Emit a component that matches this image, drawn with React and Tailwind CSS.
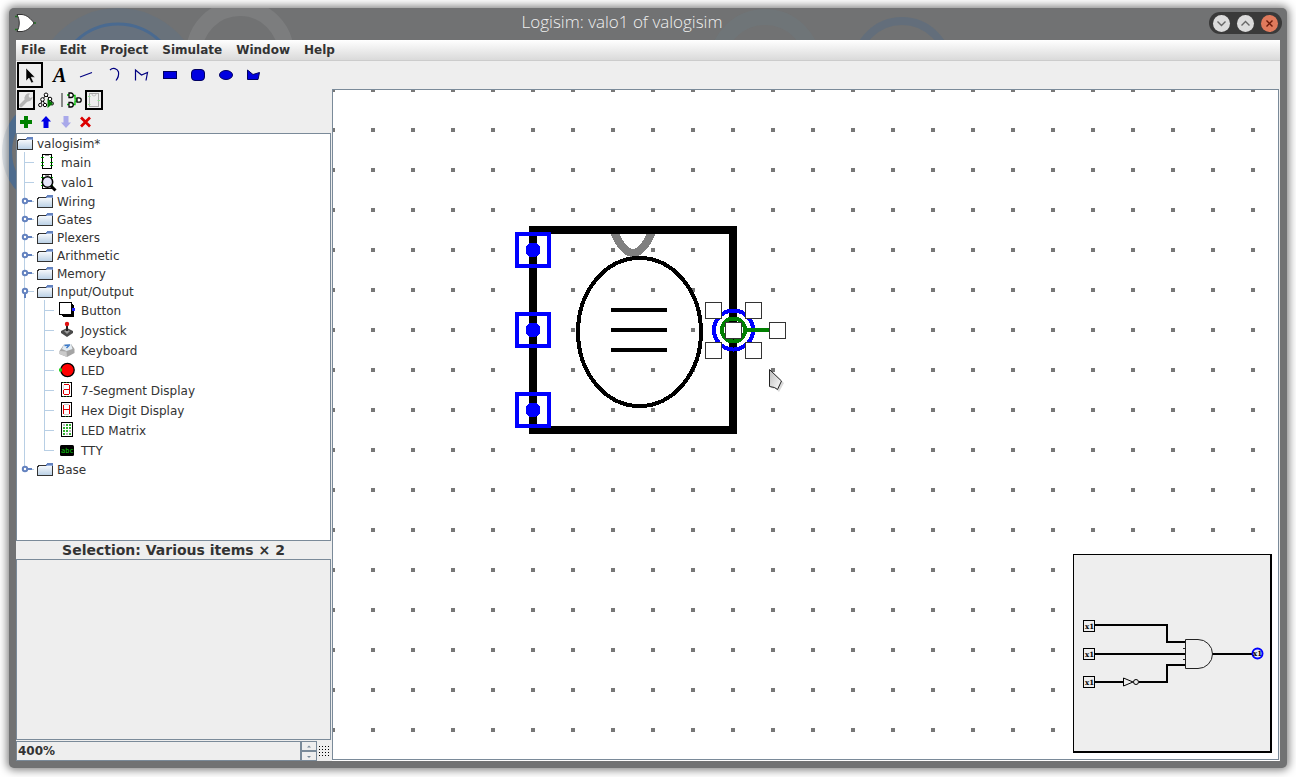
const line = "#b8cfe5";

function Folder() {
  return (
    <svg width="16" height="18" viewBox="0 0 16 18" shapeRendering="crispEdges" className="shrink-0">
      <defs>
        <linearGradient id="folderFill" x1="0" y1="0" x2="0" y2="1">
          <stop offset="0" stopColor="#ffffff" />
          <stop offset="1" stopColor="#b8cfe5" />
        </linearGradient>
      </defs>
      <path d="M0.5 15.5V6.5H1.5V5.5H8.5L10.5 4.5H15.5V15.5Z" fill="url(#folderFill)" stroke="#333333" />
      <path d="M9 5V4H10V3H16V6H9Z" fill="#6382bf" />
      <path d="M10 5H15V6H10Z" fill="#9bb4dc" />
    </svg>
  );
}

function Gutter({ h, depth, handle, last }) {
  const m = h / 2;
  const w = depth === 1 ? 20 : 40;
  const x = depth === 1 ? 7 : 27;
  return (
    <svg width={w} height={h} viewBox={`0 0 ${w} ${h}`} className="shrink-0" shapeRendering="crispEdges">
      {depth === 2 && <rect x="7" y="0" width="1" height={h} fill={line} />}
      <rect x={x} y="0" width="1" height={last ? m : h} fill={line} />
      <rect x={x} y={m} width="10" height="1" fill={line} />
      {handle && (
        <g shapeRendering="auto">
          {handle === "closed" ? (
            <path d={`M9 ${m}H15`} stroke="#6382bf" strokeWidth="2" />
          ) : (
            <path d={`M8 ${m}V${m + 7}`} stroke="#6382bf" strokeWidth="2" />
          )}
          <circle cx="8" cy={m} r="2.2" fill="#ffffff" stroke="#6382bf" strokeWidth="2" />
        </g>
      )}
    </svg>
  );
}

function CircuitGlyph() {
  return (
    <g>
      <rect x="5.5" y="2.5" width="9" height="14" fill="#fff" stroke="#000" />
      <path d="M8 3.5H12" stroke="#999" />
      <path d="M4 5.5h3M4 10.5h3M4 13.5h3M13 5.5h3M13 10.5h3M13 13.5h3" stroke="#00c800" />
      <path d="M5 5.5h1M5 10.5h1M5 13.5h1M14 5.5h1M14 10.5h1M14 13.5h1" stroke="#004000" />
    </g>
  );
}

const glyphs = {
  main: <CircuitGlyph />,
  valo1: (
    <g>
      <CircuitGlyph />
      <g shapeRendering="auto">
        <path d="M14 14L18.500 18.500" stroke="#000" strokeWidth="3" />
        <circle cx="10.500" cy="10" r="5.200" fill="#e2e2fa" fillOpacity="0.9" stroke="#000" strokeWidth="1.5" />
      </g>
    </g>
  ),
  Button: (
    <g>
      <path d="M4 15h11V4l2 2v11H6z" fill="#000" />
      <rect x="2.500" y="2.500" width="12" height="12" fill="#fff" stroke="#000" />
      <rect x="15" y="8" width="3" height="3" fill="#2222ff" />
    </g>
  ),
  Joystick: (
    <g shapeRendering="auto">
      <path d="M4 11L10 8L16 11V13L10 17L4 13Z" fill="#4a4a4a" />
      <path d="M7 11L10 10L13 11L10 14Z" fill="#9a9a9a" />
      <path d="M10 4V11" stroke="#222" strokeWidth="2" />
      <circle cx="10" cy="4" r="2.200" fill="#e01010" />
    </g>
  ),
  Keyboard: (
    <g shapeRendering="auto">
      <path d="M2.500 11L7 4.500L14 4L17.500 9L17.500 13L10 17L2.500 14Z" fill="#a4a4a4" />
      <path d="M7 4.500L14 4L15.500 9L9.500 11L5 9Z" fill="#e4ecf2" />
      <path d="M2.500 11L9.500 11.500L10 17L2.500 14Z" fill="#cacaca" />
      <path d="M7.500 5.500L13 5M9.500 8L12 5.500" stroke="#3a78c8" strokeWidth="1.400" />
    </g>
  ),
  LED: (
    <g shapeRendering="auto">
      <circle cx="10.500" cy="10" r="6.700" fill="#ff0000" stroke="#000" strokeWidth="1.300" />
      <path d="M2 10H5" stroke="#20d020" strokeWidth="3" />
    </g>
  ),
  "7-Segment Display": (
    <g>
      <rect x="4.500" y="2.500" width="10" height="14" fill="#fff" stroke="#000" />
      <path d="M6.500 5V14" stroke="#ddd" />
      <path d="M7 4.500H12M12.500 5V14M7 14.500H12M7 9.500H12M6.500 10V14" stroke="#e00000" fill="none" />
      <path d="M6 16.500h8M6 2.500h8" stroke="#208020" strokeDasharray="1 2" />
    </g>
  ),
  "Hex Digit Display": (
    <g>
      <rect x="4.500" y="2.500" width="10" height="14" fill="#fff" stroke="#000" />
      <path d="M7 14.500H12M7 4.500H12" stroke="#ccc" />
      <path d="M6.500 5V14M12.500 5V14M7 9.500H12" stroke="#e00000" />
      <path d="M8 16.500h4" stroke="#208020" strokeDasharray="1 2" />
    </g>
  ),
  "LED Matrix": (
    <g>
      <rect x="4.500" y="2.500" width="11" height="14" fill="#fff" stroke="#000" />
      {[4, 7, 10, 13].map((y, r) =>
        [6, 9, 12].map((x, c) => (
          <rect key={`${x}-${y}`} x={x} y={y} width="2" height="2" fill={(r + c) % 4 === 0 ? "#bbbbbb" : "#30b030"} />
        ))
      )}
    </g>
  ),
  TTY: (
    <g>
      <rect x="3" y="5" width="14" height="11" rx="1.500" fill="#000" shapeRendering="auto" />
      <text x="4" y="13" fontSize="7" fill="#10d010" className="font-['DejaVu_Sans_Mono',monospace]">abc</text>
    </g>
  ),
};

function Glyph({ name }) {
  return (
    <svg width="20" height="20" viewBox="0 0 20 20" shapeRendering="crispEdges" className="shrink-0">
      {glyphs[name]}
    </svg>
  );
}

function ToolRow({ name, depth, last }) {
  return (
    <li className="flex h-[20px] items-center">
      <Gutter h={20} depth={depth} last={last} />
      <Glyph name={name} />
      <a href="#" className="ml-1 pt-[2px]">{name}</a>
    </li>
  );
}

function LibraryRow({ name, open, last, children }) {
  return (
    <li>
      <div className="flex h-[18px] items-center">
        <Gutter h={18} depth={1} handle={open ? "open" : "closed"} last={last} />
        <Folder />
        <a href="#" className="ml-1 pt-[2px]">{name}</a>
      </div>
      {children && <ul>{children}</ul>}
    </li>
  );
}

const closedLibraries = ["Wiring", "Gates", "Plexers", "Arithmetic", "Memory"];
const ioTools = ["Button", "Joystick", "Keyboard", "LED", "7-Segment Display", "Hex Digit Display", "LED Matrix", "TTY"];

function Tree() {
  return (
    <ul className="min-h-0 flex-1 overflow-hidden border border-[#7a8a99] bg-white text-[12px]/[18px] text-[#333333]">
      <li>
        <div className="flex h-[18px] items-center">
          <Folder />
          <a href="#" className="ml-1 pt-[2px]">valogisim*</a>
        </div>
        <ul>
          <ToolRow name="main" depth={1} />
          <ToolRow name="valo1" depth={1} />
          {closedLibraries.map((n) => (
            <LibraryRow key={n} name={n} />
          ))}
          <LibraryRow name="Input/Output" open>
            {ioTools.map((n) => (
              <ToolRow key={n} name={n} depth={2} last={n === "TTY"} />
            ))}
          </LibraryRow>
          <LibraryRow name="Base" last />
        </ul>
      </li>
    </ul>
  );
}

const drawTools = [
  ["Select", <path d="M6 3V16L9 13L11.500 18L13.500 17L11.200 12.200H15Z" fill="#000" stroke="#fff" strokeWidth="0.500" />],
  ["Text", <text x="5" y="17" fontSize="20" fontWeight="bold" fontStyle="italic" className="font-['Liberation_Serif',serif]">A</text>],
  ["Line", <path d="M4 12L16 7.500" stroke="#000080" strokeWidth="1.200" />],
  ["Curve", <path d="M6 5C9 2 13.500 3.500 14.500 7C15 10 14 13 12 15.500" stroke="#000080" strokeWidth="1.200" fill="none" />],
  ["Polyline", <path d="M3.500 15.500V5L9.500 10L15.500 7.500L14 15.500" stroke="#000080" strokeWidth="1.200" fill="none" />],
  ["Rectangle", <rect x="3.500" y="6.500" width="13" height="7" fill="#0000e0" stroke="#000060" />],
  ["Rounded rectangle", <rect x="3.500" y="4.500" width="13" height="11" rx="3.500" fill="#0000e0" stroke="#000060" />],
  ["Oval", <ellipse cx="10" cy="10" rx="6.500" ry="4.500" fill="#0000e0" stroke="#000060" />],
  ["Polygon", <path d="M3.500 14.500V5L9 9.500L15.500 7.500L14 14.500Z" fill="#0000e0" stroke="#000060" />],
];

function DrawToolbar() {
  return (
    <div role="toolbar" aria-label="Drawing tools" className="flex h-[28px] items-center gap-[2px] px-px">
      {drawTools.map(([name, icon], i) => (
        <button
          key={name}
          type="button"
          aria-label={name}
          className={`flex size-[26px] items-center justify-center border-2 ${i === 0 ? "border-black" : "border-transparent"}`}
        >
          <svg width="20" height="20" viewBox="0 0 20 20" className="shrink-0">{icon}</svg>
        </button>
      ))}
    </div>
  );
}

function SmallButton({ label, active, children }) {
  return (
    <button
      type="button"
      aria-label={label}
      className={`flex h-[20px] w-[18px] items-center justify-center border-2 ${active ? "border-black" : "border-transparent"}`}
    >
      <svg width="16" height="16" viewBox="0 0 16 16" className="shrink-0">{children}</svg>
    </button>
  );
}

function ExplorerToolbars() {
  return (
    <>
      <div role="toolbar" aria-label="Views" className="flex h-[22px] items-center gap-[2px] px-px">
        <SmallButton label="Show toolbox" active>
          <path d="M3 13.500L8.500 8" stroke="#b4b4b4" strokeWidth="3.500" strokeLinecap="round" />
          <path d="M7 8A4.500 4.500 0 0 1 12 1.500L10.500 4L12 6L14.500 5A4.500 4.500 0 0 1 8 9Z" fill="#b4b4b4" />
        </SmallButton>
        <SmallButton label="Show simulation">
          <g fill="#fff" stroke="#000" strokeWidth="1">
            <path d="M8 3L4.500 7.500L2.500 12.500M4.500 7.500L7 12.500M8 3L12 7L14.500 11.500" fill="none" />
            <circle cx="8" cy="2.800" r="1.800" />
            <circle cx="4.500" cy="7.500" r="1.800" />
            <circle cx="12" cy="7" r="1.800" />
            <circle cx="2.300" cy="13" r="1.700" />
            <circle cx="7" cy="13" r="1.700" />
            <circle cx="14" cy="11.500" r="1.500" />
          </g>
          <path d="M9.500 7L15 11.500L9.500 16Z" fill="#007800" />
        </SmallButton>
        <span className="ml-1 h-[14px] w-[2px] bg-[#888888]" />
        <SmallButton label="Edit circuit layout">
          <g fill="none">
            <path d="M1 3H3M1 12.500H3M7 3.500H9V7H12M7 12.500H9V9H12" stroke="#00c000" strokeWidth="1.300" />
            <path d="M3 1H5A2.200 2.200 0 0 1 5 5.500H3ZM3 10.500H5A2.200 2.200 0 0 1 5 15H3ZM11 5.800H13A2.200 2.200 0 0 1 13 10.200H11Z" fill="#fff" stroke="#000" strokeWidth="1.300" />
          </g>
        </SmallButton>
        <SmallButton label="Edit circuit appearance" active>
          <rect x="3.500" y="1.500" width="9" height="13" fill="#eeeeee" stroke="#a8a8a8" />
          <path d="M6 2A2 2 0 0 0 10 2" fill="none" stroke="#c0c0c0" />
          <path d="M2 4.500H4.500M2 12.500H4.500M11.500 8.500H14" stroke="#90e090" />
        </SmallButton>
      </div>
      <div role="toolbar" aria-label="Circuits" className="flex h-[22px] items-center gap-[2px] px-px">
        <SmallButton label="Add circuit">
          <path d="M6 2h4v4h4v4h-4v4h-4v-4h-4V6h4Z" fill="#008000" />
        </SmallButton>
        <SmallButton label="Move circuit up">
          <path d="M8 2L13 7.500H10.500V14H5.500V7.500H3Z" fill="#0000e6" />
        </SmallButton>
        <SmallButton label="Move circuit down">
          <path d="M8 14L13 8.500H10.500V2H5.500V8.500H3Z" fill="#a8a8ea" />
        </SmallButton>
        <SmallButton label="Delete circuit">
          <path d="M3 3.500L12 12.500M12 3.500L3 12.500" stroke="#dc0000" strokeWidth="2.700" />
        </SmallButton>
      </div>
    </>
  );
}

function Minimap() {
  const text = "font-['DejaVu_Serif',serif] font-bold";
  return (
    <div className="absolute bottom-[6px] right-[6px] border-b-2 border-l border-r-2 border-t border-black bg-[#eeeeee]">
      <svg width="196" height="196" viewBox="1 1 196 196" shapeRendering="crispEdges">
        <g fill="none" stroke="#000" strokeWidth="2">
          <path d="M22 71H94V88H112" />
          <path d="M22 100H112" />
          <path d="M22 128H50M66 128H94V111H112" />
          <path d="M139 100H179" />
        </g>
        <g fill="none" stroke="#222" shapeRendering="auto">
          <path d="M112.500 85.500H125A14.500 14.500 0 0 1 125 114.500H112.500Z" />
          <path d="M110 94.500H112M110 105.500H112" />
          <path d="M50.500 124V132L60 128Z" fill="#eee" stroke="#000" />
          <circle cx="63" cy="128" r="2.500" fill="#eee" stroke="#000" />
        </g>
        {[66.5, 94.5, 122.5].map((y) => (
          <g key={y}>
            <rect x="10.500" y={y} width="11" height="11" fill="#eee" stroke="#000" />
            <text x="12" y={y + 8.5} fontSize="7" className={text}>x1</text>
          </g>
        ))}
        <circle cx="184.500" cy="99.500" r="5" fill="none" stroke="#0000ff" strokeWidth="2" shapeRendering="auto" />
        <text x="180" y="102" fontSize="7" className={text}>x1</text>
      </svg>
    </div>
  );
}

function Canvas() {
  const handles = [[372.5, 212.5], [412.5, 212.5], [372.5, 252.5], [412.5, 252.5], [392.5, 232.5], [436.5, 232.5]];
  return (
    <main className="relative min-w-0 flex-1 border border-[#7a8a99] bg-white">
      <svg width="100%" height="100%" className="absolute inset-0" shapeRendering="crispEdges">
        <defs>
          <pattern id="grid" x="-20" y="-20" width="40" height="40" patternUnits="userSpaceOnUse">
            <rect x="18" y="18" width="4" height="4" fill="#777777" />
          </pattern>
          <linearGradient id="cursorFill" x1="0" y1="0" x2="1" y2="1">
            <stop offset="0" stopColor="#bbbbbb" />
            <stop offset="1" stopColor="#ffffff" />
          </linearGradient>
        </defs>
        <rect width="100%" height="100%" fill="url(#grid)" />
        <path d="M280 140Q300 186 320 140" fill="none" stroke="#808080" strokeWidth="8" />
        <rect x="200" y="140" width="200" height="200" fill="none" stroke="#000" strokeWidth="8" />
        <ellipse cx="306.500" cy="242" rx="61.500" ry="74" fill="none" stroke="#000" strokeWidth="4" />
        <path d="M278 220H334M278 240H334M278 260H334" stroke="#000" strokeWidth="4" />
        {[160, 240, 320].map((y) => (
          <g key={y}>
            <rect x="184" y={y - 16} width="32" height="32" fill="none" stroke="#0000ff" strokeWidth="4" />
            <circle cx="200" cy={y} r="7.500" fill="#0000ff" />
          </g>
        ))}
        <circle cx="400.500" cy="240" r="19.500" fill="none" stroke="#0000ff" strokeWidth="4" />
        <circle cx="400.500" cy="240" r="11.500" fill="none" stroke="#008000" strokeWidth="4" />
        <path d="M412 240H440" stroke="#008000" strokeWidth="4" />
        {handles.map(([x, y]) => (
          <rect key={`${x}-${y}`} x={x} y={y} width="16" height="16" fill="#fff" stroke="#333" />
        ))}
        <g shapeRendering="auto">
          <path d="M438 281V298L443 299L446 302L451 293Z" fill="#000" opacity="0.150" />
          <path d="M436.500 279.500V296.500L441.500 297.500L444.500 299.500L448.500 291Z" fill="url(#cursorFill)" stroke="#222" strokeLinejoin="round" />
        </g>
      </svg>
      <Minimap />
    </main>
  );
}

function ZoomBar() {
  return (
    <div className="mt-px flex h-[20px] items-stretch">
      <input
        aria-label="Zoom"
        defaultValue="400%"
        className="min-w-0 flex-1 border border-[#7a8a99] bg-[#eeeeee] px-px text-[12px]/[18px] font-bold text-[#333333]"
      />
      <div className="flex w-[16px] flex-col">
        {["M5 4.500L7 2.500L9 4.500Z", "M5 3L7 5L9 3Z"].map((d, i) => (
          <button key={d} type="button" aria-label={i ? "Zoom out" : "Zoom in"} className="flex flex-1 items-center justify-center border border-[#7a8a99]">
            <svg width="14" height="7" viewBox="0 0 14 7"><path d={d} fill="#7a8a99" /></svg>
          </button>
        ))}
      </div>
      <button type="button" aria-label="Toggle grid" className="flex w-[14px] items-center justify-center">
        <svg width="12" height="12" viewBox="0 0 12 12" shapeRendering="crispEdges">
          {[0, 3, 6, 9].map((x) => [0, 3, 6, 9].map((y) => <rect key={`${x}-${y}`} x={x + 1} y={y + 1} width="1" height="1" fill="#000" />))}
        </svg>
      </button>
    </div>
  );
}

function Backdrop() {
  return (
    <svg width="100%" height="100%" className="pointer-events-none absolute inset-0 overflow-visible">
      <circle cx="51" cy="144" r="53" fill="none" stroke="#4a6a90" strokeWidth="10" strokeOpacity="0.900" clipPath="url(#frameClip)" />
      <circle cx="51" cy="144" r="53" fill="none" stroke="#4a6a90" strokeWidth="10" strokeOpacity="0.150" />
      <defs>
        <clipPath id="frameClip"><rect x="0" y="100" width="10" height="100" /></clipPath>
      </defs>
    </svg>
  );
}

function TitleBar() {
  return (
    <header className="relative flex h-[32px] items-start justify-center overflow-hidden rounded-t-[5px] pr-[52px]">
      <svg width="100%" height="32" className="absolute inset-0">
        <circle cx="109" cy="84" r="84" fill="#5f7286" fillOpacity="0.400" />
        <circle cx="109" cy="76" r="60" fill="#5f7286" fillOpacity="0.300" stroke="#4a6a90" strokeWidth="3" />
        <circle cx="231" cy="46" r="46" fill="none" stroke="#ffffff" strokeOpacity="0.080" strokeWidth="16" />
        <circle cx="756" cy="57" r="48" fill="none" stroke="#6c7a80" strokeOpacity="0.350" strokeWidth="16" />
        <circle cx="893" cy="59" r="46" fill="none" stroke="#5a6c80" strokeOpacity="0.600" strokeWidth="8" />
      </svg>
      <svg width="22" height="20" viewBox="0 0 22 20" className="absolute left-[6px] top-[5px]">
        <path d="M0 3.500H5M0 16.500H5M17 10H21" stroke="#207020" strokeWidth="1.500" />
        <path d="M2 1.500H7C12 2 16 6 19 10C16 14 12 18 7 18.500H2C5 13 5 7 2 1.500Z" fill="#fff" stroke="#333" />
      </svg>
      <h1 className="relative pt-[2px] font-['Open_Sans',sans-serif] text-[17px]/[24px] font-light text-[#f0f0f0]">Logisim: valo1 of valogisim</h1>
      <div className="absolute right-[5px] top-[4px] flex h-[22px] items-center gap-[7px] rounded-full bg-[#3a3a3a] px-[4px]">
        {[
          ["Minimize", "M4.500 6.500L8.500 10.500L12.500 6.500", "bg-[#dcdcdc]", "#666666"],
          ["Maximize", "M4.500 10.500L8.500 6.500L12.500 10.500", "bg-[#dcdcdc]", "#666666"],
          ["Close", "M5.500 5.500L11.500 11.500M11.500 5.500L5.500 11.500", "bg-[#e07a5c]", "#6a1a0a"],
        ].map(([label, d, bg, stroke]) => (
          <button key={label} type="button" aria-label={label} className={`size-[17px] rounded-full ${bg}`}>
            <svg width="17" height="17" viewBox="0 0 17 17"><path d={d} fill="none" stroke={stroke} strokeWidth="1.400" /></svg>
          </button>
        ))}
      </div>
    </header>
  );
}

export default function App() {
  return (
    <div className="flex h-screen flex-col overflow-hidden bg-white px-[9px] pb-[9px] pt-[8px] font-['DejaVu_Sans',sans-serif]">
      <div className="relative flex min-h-0 flex-1 flex-col rounded-[5px] bg-[#717273] shadow-[0_0_9px_2px_rgba(0,0,0,0.5)]">
        <Backdrop />
        <TitleBar />
        <div className="relative mx-[7px] mb-[7px] flex min-h-0 flex-1 flex-col bg-[#eeeeee]">
          <nav className="flex h-[21px] items-center gap-[14px] border-b border-[#cccccc] bg-linear-to-b from-white to-[#dadada] px-[5px] text-[12px]/[18px] font-bold text-[#333333]">
            {["File", "Edit", "Project", "Simulate", "Window", "Help"].map((m) => (
              <button key={m} type="button">{m}</button>
            ))}
          </nav>
          <DrawToolbar />
          <div className="flex min-h-0 flex-1 pr-px">
            <aside className="mr-px flex w-[315px] shrink-0 flex-col">
              <ExplorerToolbars />
              <Tree />
              <h2 className="h-[18px] text-center text-[14px]/[18px] font-bold text-[#333333]">Selection: Various items × 2</h2>
              <div className="h-[181px] border border-[#7a8a99]" />
              <ZoomBar />
            </aside>
            <div className="flex min-w-0 flex-1 bg-white pb-px">
              <Canvas />
            </div>
          </div>
        </div>
      </div>
    </div>
  );
}
